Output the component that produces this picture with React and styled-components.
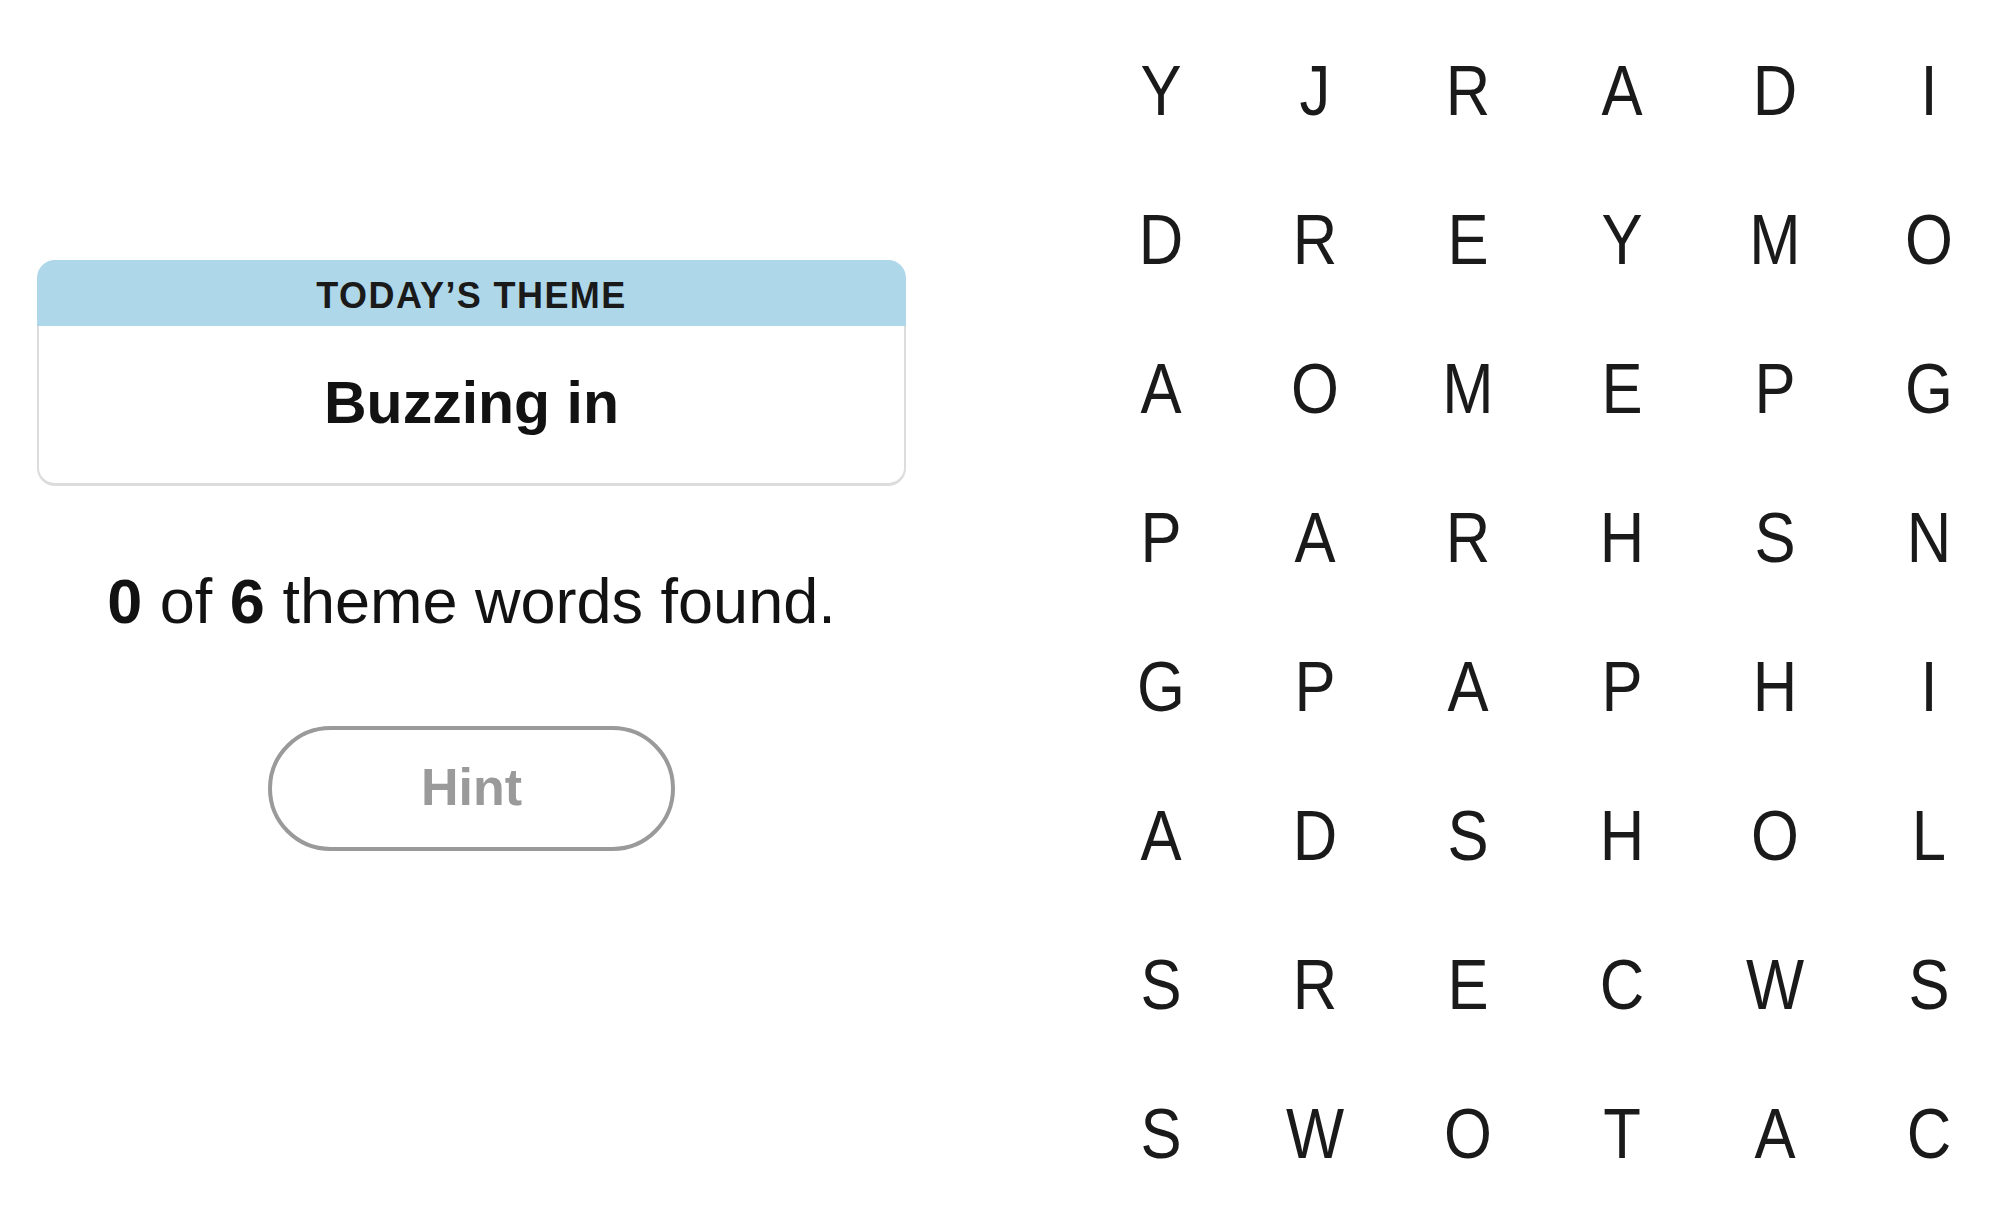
import styled, { createGlobalStyle } from 'styled-components'

const rows = [
    'YJRADI',
    'DREYMO',
    'AOMEPG',
    'PARHSN',
    'GPAPHI',
    'ADSHOL',
    'SRECWS',
    'SWOTAC',
]

const App = () => {
    return (
        <>
            <GlobalStyle />
            <Page>
                <SidePanel>
                    <ThemeCard>
                        <ThemeHeader>Today’s Theme</ThemeHeader>
                        <ThemeBody>Buzzing in</ThemeBody>
                    </ThemeCard>
                    <FoundText>
                        <b>0</b> of <b>6</b> theme words found.
                    </FoundText>
                    <HintButton>Hint</HintButton>
                </SidePanel>
                <Board>
                    {rows.map((row, r) =>
                        row.split('').map((letter, c) => (
                            <Cell key={`${r}-${c}`}>{letter}</Cell>
                        ))
                    )}
                </Board>
            </Page>
        </>
    )
}

export default App

const GlobalStyle = createGlobalStyle`
    html, body {
        margin: 0;
        padding: 0;
        background: #ffffff;
        overflow: hidden;
    }

    body {
        font-family: "Liberation Sans", Arial, sans-serif;
        color: #121212;
    }
`

const Page = styled.div`
    display: flex;
    width: 2000px;
    height: 1208px;
    padding-left: 37px;
    box-sizing: border-box;
`

const SidePanel = styled.div`
    width: 869px;
    display: flex;
    flex-direction: column;
    align-items: center;
    padding-top: 260px;
`

const ThemeCard = styled.div`
    width: 100%;
    display: flex;
    flex-direction: column;
`

const ThemeHeader = styled.div`
    height: 66px;
    display: flex;
    align-items: center;
    justify-content: center;
    padding-top: 6px;
    box-sizing: border-box;
    background-color: #aed8ea;
    border-radius: 18px 18px 0 0;
    font-size: 36px;
    font-weight: 700;
    letter-spacing: 1.4px;
    text-transform: uppercase;
    color: #1a1a1a;
`

const ThemeBody = styled.div`
    height: 160px;
    display: flex;
    align-items: center;
    justify-content: center;
    border: 2px solid #dcdcdc;
    border-top: none;
    border-bottom-width: 3px;
    border-radius: 0 0 18px 18px;
    font-size: 59px;
    font-weight: 700;
    padding-bottom: 4px;
    box-sizing: border-box;
`

const FoundText = styled.p`
    margin: 84px 0 0;
    font-size: 63px;
    line-height: 1;
    font-weight: 400;
    white-space: nowrap;

    > b {
        font-weight: 700;
    }
`

const HintButton = styled.button`
    margin-top: 93px;
    width: 407px;
    height: 125px;
    border: 4px solid #9a9a9a;
    border-radius: 63px;
    background: #ffffff;
    color: #9a9a9a;
    font-family: "Liberation Sans", Arial, sans-serif;
    font-size: 52px;
    font-weight: 700;
    padding: 0 0 4px;
    cursor: pointer;
`

const Board = styled.div`
    margin-left: 185px;
    padding-top: 16px;
    display: grid;
    grid-template-columns: repeat(6, 140px);
    grid-template-rows: repeat(8, 149px);
    column-gap: 13.6px;
`

const Cell = styled.div`
    display: flex;
    align-items: center;
    justify-content: center;
    font-size: 70px;
    line-height: 1;
    color: #1a1a1a;
    transform: scaleX(0.88);
    user-select: none;
`
